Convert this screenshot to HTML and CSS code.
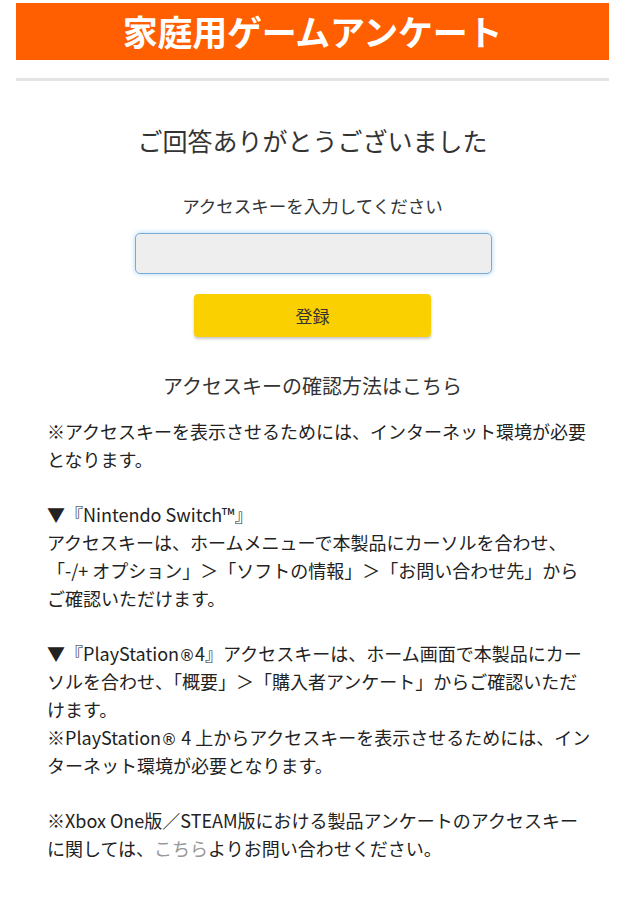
FILE: index.html
```html
<!DOCTYPE html>
<html lang="ja">
<head>
<meta charset="utf-8">
<title>家庭用ゲームアンケート</title>
<link rel="stylesheet" href="styles.css">
</head>
<body>
<div class="page">
  <header class="banner"><h1 class="banner-title">家庭用ゲームアンケート</h1></header>
  <div class="rule"></div>
  <main class="content">
    <h2 class="thanks">ご回答ありがとうございました</h2>
    <p class="prompt">アクセスキーを入力してください</p>
    <input class="key-input" type="text">
    <button class="submit" type="button">登録</button>
    <h3 class="howto">アクセスキーの確認方法はこちら</h3>
    <div class="notes">
      <p>※アクセスキーを表示させるためには、インターネット環境が必要<br>となります。</p>
      <p>▼『Nintendo Switch™』<br>アクセスキーは、ホームメニューで本製品にカーソルを合わせ、<br>「-/+ オプション」＞「ソフトの情報」＞「お問い合わせ先」から<br>ご確認いただけます。</p>
      <p>▼『PlayStation<span class="reg">®</span>4』アクセスキーは、ホーム画面で本製品にカー<br>ソルを合わせ、「概要」＞「購入者アンケート」からご確認いただ<br>けます。<br>※PlayStation<span class="reg">®</span> 4 上からアクセスキーを表示させるためには、イン<br>ターネット環境が必要となります。</p>
      <p>※Xbox One版／STEAM版における製品アンケートのアクセスキー<br>に関しては、<a class="link" href="#">こちら</a>よりお問い合わせください。</p>
    </div>
  </main>
</div>
</body>
</html>
```
FILE: styles.css
```css
html, body {
  margin: 0;
  padding: 0;
  background: #fff;
}
body {
  font-family: "Noto Sans CJK JP", "Noto Sans", sans-serif;
  color: #222;
}
.page {
  width: 593px;
  margin: 0 0 0 16px;
  padding-top: 3px;
}
.banner {
  background: #ff5f00;
  height: 57px;
  display: flex;
  align-items: center;
  justify-content: center;
}
.banner-title {
  margin: 0 0 2px;
  color: #fff;
  font-size: 35px;
  font-weight: 700;
  line-height: 1;
  letter-spacing: -0.3px;
}
.rule {
  margin-top: 18px;
  height: 3px;
  background: #e4e4e4;
}
.content {
  display: flex;
  flex-direction: column;
  align-items: center;
}
.thanks {
  margin: 41px 0 0;
  font-size: 25px;
  font-weight: 400;
  line-height: 36px;
  color: #333;
}
.prompt {
  margin: 35px 0 0;
  font-size: 17.5px;
  line-height: 26px;
  color: #333;
}
.key-input {
  margin: 14px 0 0 2px;
  box-sizing: border-box;
  width: 357px;
  height: 41px;
  background: #eee;
  border: 1px solid #78acd8;
  border-radius: 5px;
  box-shadow: 0 0 5px rgba(102, 175, 233, 0.55);
  outline: none;
}
.submit {
  margin: 20px 0 0;
  width: 237px;
  height: 43px;
  border: none;
  border-radius: 4px;
  background: #fbd000;
  box-shadow: 0 2px 3px rgba(0, 0, 0, 0.22);
  font-family: inherit;
  font-size: 17px;
  color: #333;
}
.howto {
  margin: 34px 0 0;
  font-size: 20px;
  font-weight: 400;
  line-height: 30px;
  color: #333;
}
.notes {
  align-self: stretch;
  margin: 17px 0 0;
  padding: 0 10px 0 31px;
  font-size: 18px;
  line-height: 27.8px;
}
.notes p {
  margin: 0 0 27.8px;
}
.reg {
  font-family: "DejaVu Sans", sans-serif;
  font-size: 16px;
  line-height: 0;
}
.link {
  color: #999;
  text-decoration: none;
}
```
